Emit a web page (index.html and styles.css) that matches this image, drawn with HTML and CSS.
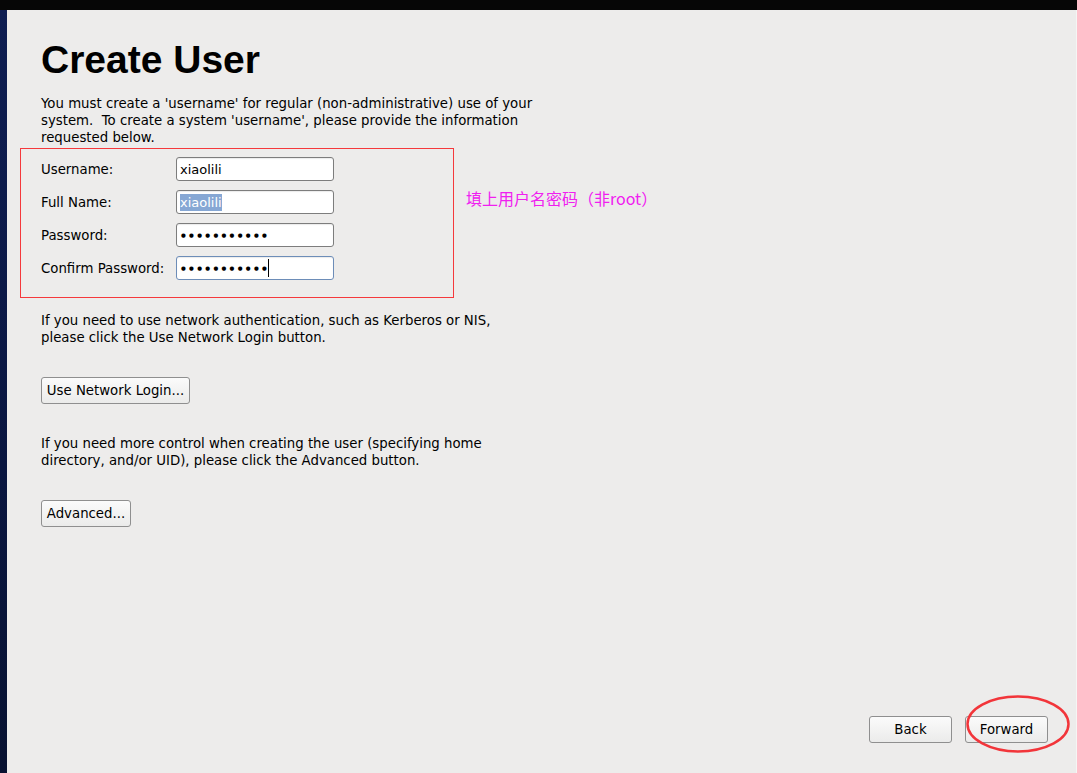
FILE: index.html
```html
<!DOCTYPE html>
<html>
<head>
<meta charset="utf-8">
<link rel="stylesheet" href="styles.css">
</head>
<body>
<div class="topbar"></div>
<div class="frame">
  <div class="strip"></div>
  <div class="main">
    <h1 class="title">Create User</h1>
    <p class="para">You must create a 'username' for regular (non-administrative) use of your<br>system.&nbsp; To create a system 'username', please provide the information<br>requested below.</p>
    <div class="form-row">
      <div class="form-box">
        <div class="row"><span class="label">Username:</span><div class="field"><span>xiaolili</span></div></div>
        <div class="row"><span class="label">Full Name:</span><div class="field"><span class="sel">xiaolili</span></div></div>
        <div class="row"><span class="label">Password:</span><div class="field"><span class="dots">●●●●●●●●●●●</span></div></div>
        <div class="row"><span class="label">Confirm Password:</span><div class="field focus"><span class="dots">●●●●●●●●●●●</span><span class="caret"></span></div></div>
      </div>
      <div class="note">填上用户名密码（非root）</div>
    </div>
    <p class="para p2">If you need to use network authentication, such as Kerberos or NIS,<br>please click the Use Network Login button.</p>
    <button class="btn b-net">Use Network Login...</button>
    <p class="para p3">If you need more control when creating the user (specifying home<br>directory, and/or UID), please click the Advanced button.</p>
    <button class="btn b-adv">Advanced...</button>
    <div class="footer">
      <button class="btn nav">Back</button>
      <button class="btn nav">Forward</button>
    </div>
  </div>
</div>
<svg class="circle" width="106" height="62" viewBox="0 0 106 62"><ellipse cx="53" cy="29" rx="50.5" ry="27.5" fill="none" stroke="#f2353a" stroke-width="2.5"/></svg>
</body>
</html>
```

FILE: styles.css
```css
html, body {
  margin: 0;
  padding: 0;
  height: 773px;
  overflow: hidden;
  background: #edeceb;
}
body {
  display: flex;
  flex-direction: column;
  font-family: "DejaVu Sans", sans-serif;
  font-size: 13.3px;
  color: #000;
}
.topbar {
  height: 10px;
  background: #060606;
  flex: none;
}
.frame {
  flex: 1;
  display: flex;
}
.strip {
  width: 7px;
  background: linear-gradient(#0f1e52, #0a1640 60%, #081231);
  flex: none;
}
.main {
  flex: 1;
  display: flex;
  flex-direction: column;
  align-items: flex-start;
  padding: 27px 0 0 34px;
  background: #edeceb;
  border-right: 1px solid #f6f5f4;
}
.title {
  font-family: "Liberation Sans", Arial, sans-serif;
  font-weight: bold;
  font-size: 39px;
  line-height: 46px;
  margin: 0;
}
.para {
  margin: 12px 0 0 0;
  line-height: 17px;
}
.form-row {
  display: flex;
  align-items: flex-start;
  margin: 2px 0 0 -21px;
}
.form-box {
  border: 1px solid #f5393c;
  width: 412px;
  padding: 8px 0 17px 20px;
  display: flex;
  flex-direction: column;
  gap: 9px;
}
.row {
  display: flex;
  align-items: center;
  height: 24px;
}
.label {
  width: 135px;
  flex: none;
}
.field {
  box-sizing: border-box;
  width: 158px;
  height: 24px;
  background: #fff;
  border: 1px solid #7d7d7d;
  border-radius: 3px;
  padding: 0 3px;
  display: flex;
  align-items: center;
  box-shadow: inset 0 1px 1px rgba(0,0,0,0.08);
  font-size: 13px;
}
.field.focus {
  border-color: #6d8db8;
}
.sel {
  background: #86a7d4;
  color: #fff;
  line-height: 17px;
}
.dots {
  font-size: 5.5px;
  letter-spacing: 3.3px;
  padding-left: 1px;
}
.caret {
  width: 1px;
  height: 18px;
  background: #000;
  margin-left: -2px;
}
.note {
  font-family: "Noto Sans CJK SC", sans-serif;
  font-size: 16px;
  line-height: 20px;
  color: #f020f0;
  margin: 40px 0 0 12px;
}
.p2 {
  margin-top: 14px;
}
.btn {
  box-sizing: border-box;
  font-family: "DejaVu Sans", sans-serif;
  font-size: 13.3px;
  color: #000;
  height: 27px;
  border: 1px solid #8f8f8f;
  border-radius: 3px;
  background: linear-gradient(#fbfbfb, #ebebea);
  padding: 0;
  margin: 0;
  white-space: nowrap;
}
.b-net {
  margin-top: 31px;
  width: 149px;
}
.b-adv {
  margin-top: 31px;
  width: 90px;
}
.p3 {
  margin-top: 31px;
}
.footer {
  margin-top: auto;
  align-self: flex-end;
  display: flex;
  gap: 13px;
  padding: 0 28px 30px 0;
}
.nav {
  width: 83px;
}
.circle {
  position: absolute;
  left: 965px;
  top: 695px;
}
```
